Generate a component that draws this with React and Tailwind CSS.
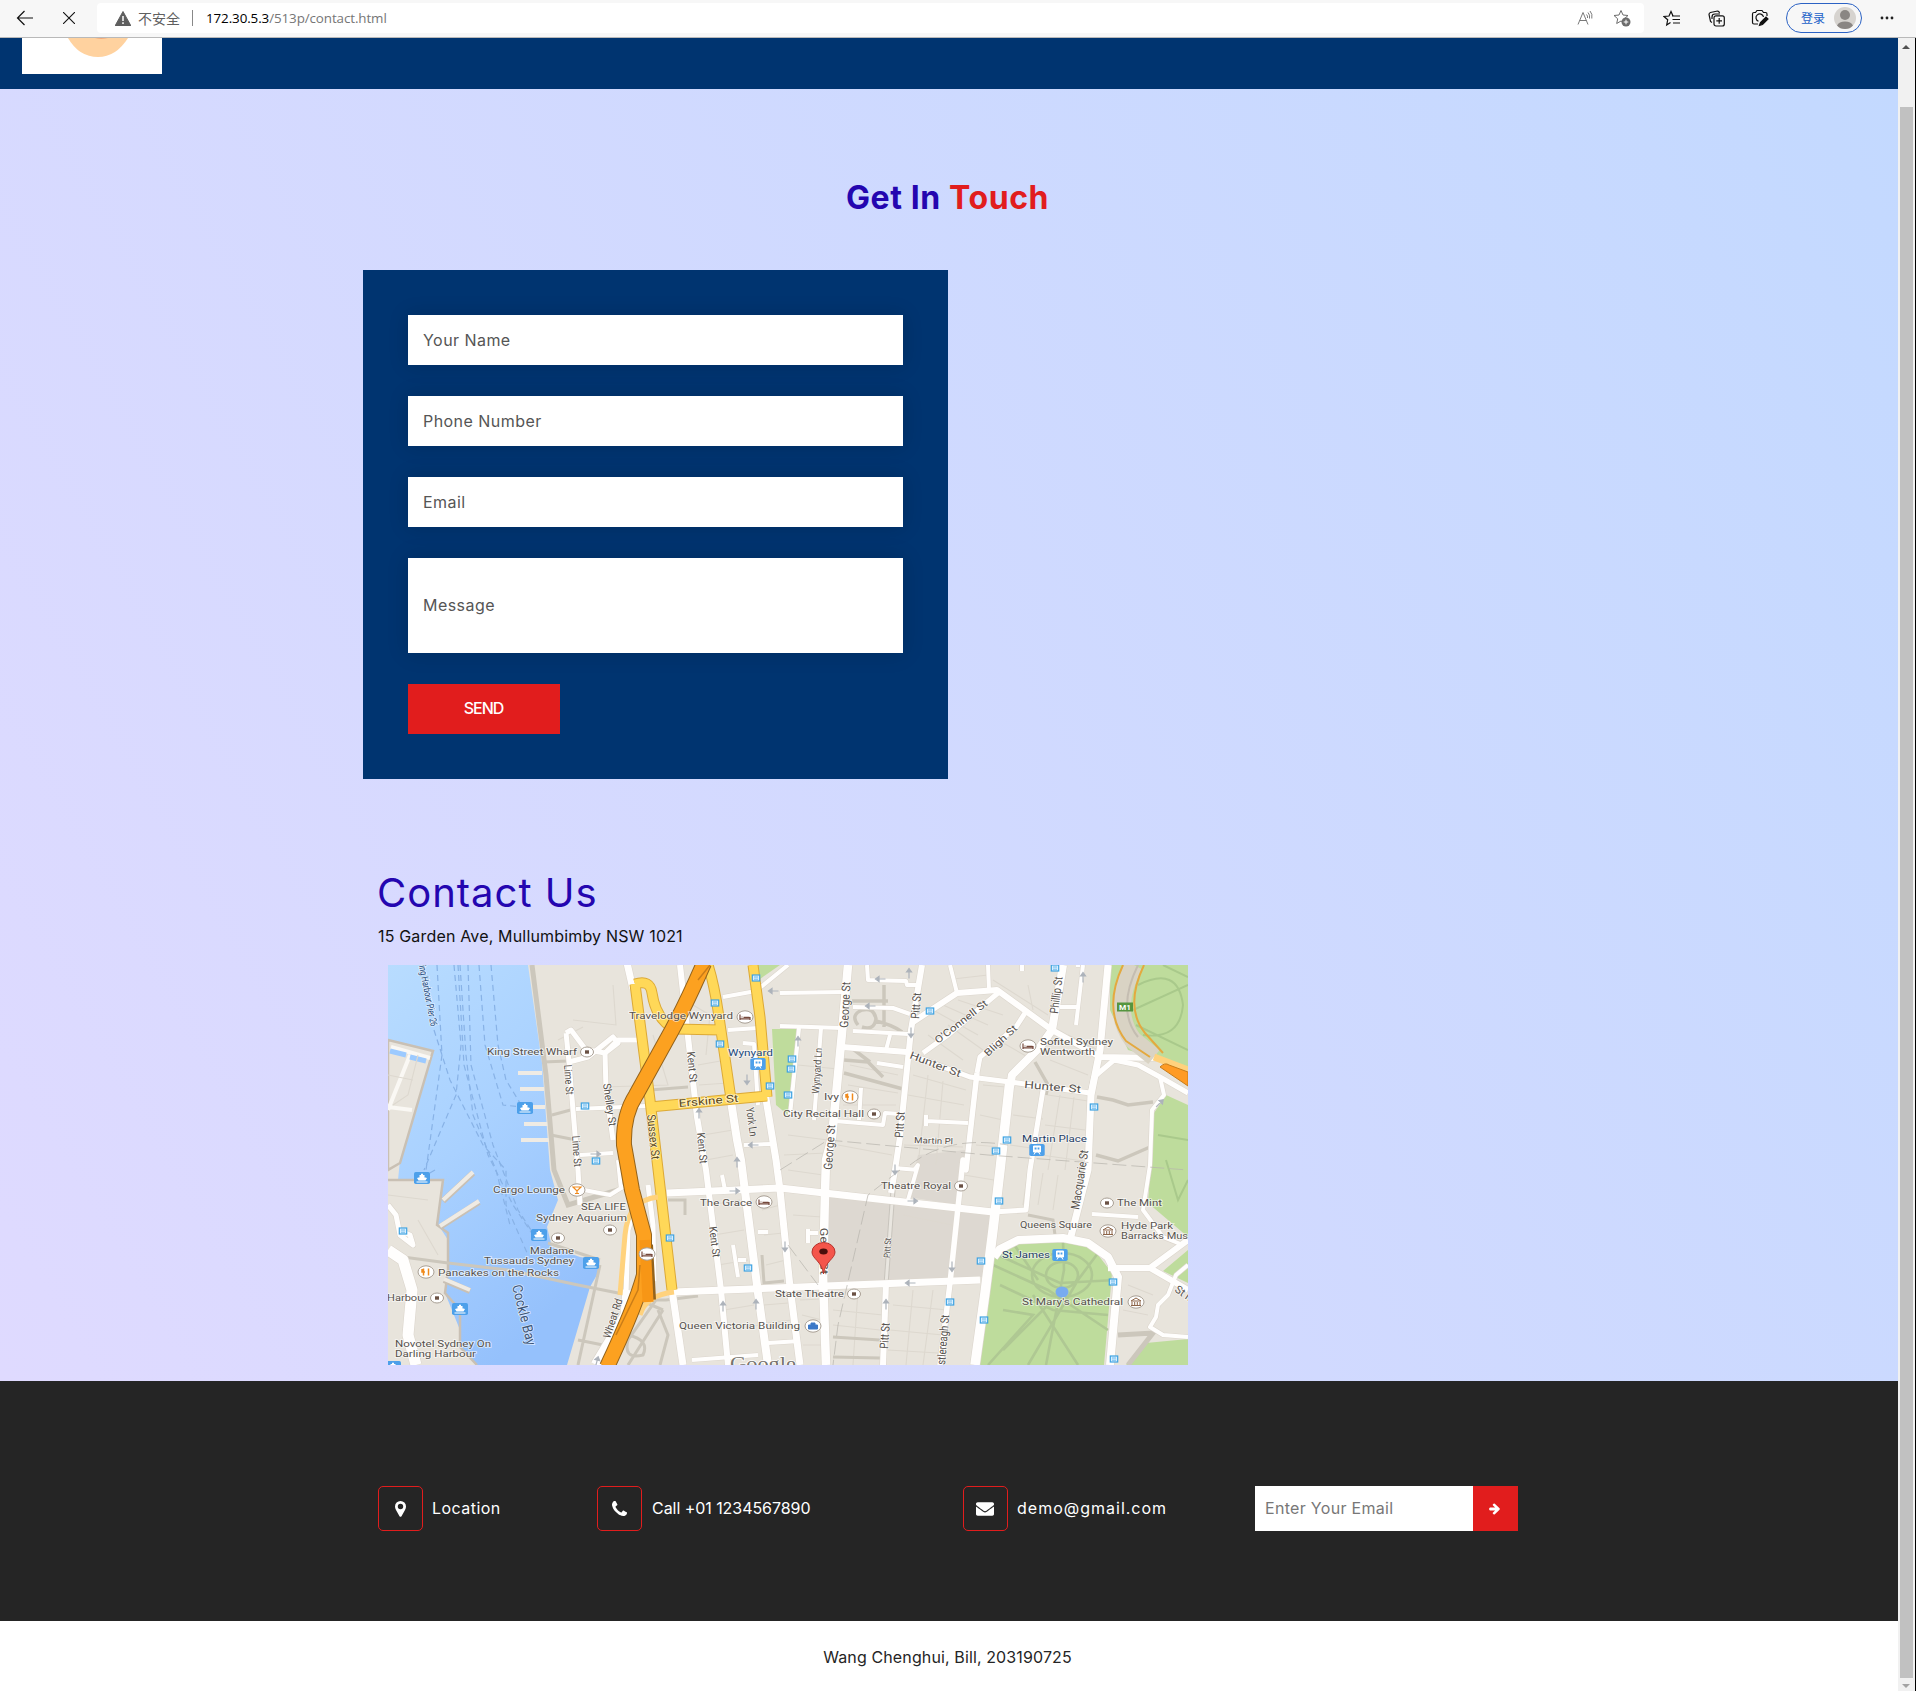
import React from "react";
import { FaEnvelope } from "react-icons/fa";

const WHITE_ROADS = [
  ["M292 0 L300 72 L309 152 L318 205 L333 325 L340 400", 6],
  ["M342 130 L349 175 L353 195 L370 328 L380 400", 8],
  ["M377 128 L388 195 L392 225 L402 322 L412 400", 7],
  ["M239 -2 L245 24", 7],
  ["M284 325 L295 400", 7],
  ["M460 0 L454 68 L444 172 L438 195 L437 228 L435 312 L438 400", 8.5],
  ["M534 0 L523 65 L512 172 L507 205 L503 228", 6],
  ["M498 318 L495 400", 6],
  ["M589 108 L578 205 L575 195 L562 318 L552 400", 5.5],
  ["M622 115 L612 205 L605 265 L597 328 L587 400", 9.5],
  ["M655 125 L642 205 L638 245 L605 247", 5],
  ["M523 90 L582 112 L622 117 L702 128", 5],
  ["M720 0 L712 85 L703 130 L700 205 L682 275", 7],
  ["M622 122 L624 110 L652 82 L664 65 L675 0", 8],
  ["M535 88 L560 70 L610 28", 5],
  ["M525 57 L569 28 L609 25 L664 65 L712 92 L769 93", 6],
  ["M589 108 L592 92 L628 62 L637 48", 5],
  ["M600 0 L601 25 M569 28 L562 0 M634 0 L634 6", 4],
  ["M279 228 L392 223 L605 247", 7],
  ["M285 327 L412 322 L592 315", 7],
  ["M606 292 L612 284 L630 275 L675 273 L700 278 L720 292 L730 312 L722 400", 8],
  ["M720 303 L762 303 L800 325 M762 303 L800 275", 6],
  ["M702 130 L706 112 L726 95 L750 100 L772 112 L800 128", 5],
  ["M772 112 L776 130 L764 145 L762 200 L755 245 L775 272 L795 280", 4],
  ["M454 82 L519 87", 6],
  ["M465 66 L520 69 M502 70 L498 85 M392 61 L454 63 M392 28 L456 27 M479 0 L480 15 L518 16 L519 20 L530 20", 4],
  ["M465 42 L505 43 L522 49", 4],
  ["M489 98 L515 102 M538 150 L538 161 M538 156 L580 158", 4],
  ["M447 156 L495 160 L497 148 L512 149 M473 123 L471 155", 4],
  ["M688 0 L692 0 M695 0 L688 60 M672 42 L690 42", 4],
  ["M433 63 L426 155 M411 63 L402 150", 4],
  ["M335 32 L368 26 L400 0 M340 65 L370 63", 4],
  ["M355 78 L366 79 L370 140 M356 180 L384 179", 4],
  ["M178 68 L181 97 L190 205 L192 240 M178 68 L183 65 L198 85 M181 97 L200 92 L225 72 L230 78 L217 88 M200 85 L217 88 L230 75 L250 75", 5],
  ["M217 88 L218 125 L225 175", 5],
  ["M188 144 L258 141 M192 190 L225 188 M196 225 L222 230 L238 220 M230 195 L233 225", 4],
  ["M0 240 L8 250 L12 270 L25 280 L22 270 L10 265", 5],
  ["M0 285 L15 295 L24 325 L20 370 L28 400", 11],
  ["M345 280 L350 312 M350 295 L358 295 M370 267 L380 267 M334 210 L337 225 M304 395 L370 390 M380 378 L412 376", 4],
  ["M260 220 L265 260 L266 316 M248 240 L240 265 L238 330", 5],
  ["M240 325 L238 350 L208 400", 11],
  ["M527 204 L530 200 L520 235 M507 203 L530 205", 4],
  ["M420 264 L420 278 M420 268 L430 268", 4],
  ["M800 300 L788 310 L780 330 L770 340 L768 352 L762 362 L775 370 L800 372", 4],
  ["M704 249 L750 252", 4],
];

const MINOR = [
  "M195 62 L170 75 M225 20 L228 60 L185 55 M265 70 L280 120 L215 122",
  "M305 40 L322 50 L318 90 M310 100 L338 95 M311 120 L340 118 M315 170 L345 165",
  "M318 195 L345 190 M322 240 L352 235 M326 270 L356 265 M330 300 L360 295",
  "M336 345 L366 340 M338 365 L372 360 M374 245 L392 240 M376 270 L395 268 M378 300 L398 295",
  "M376 340 L400 338 M378 358 L404 355 M410 100 L450 104 M400 170 L440 175 M396 190 L438 188",
  "M400 205 L435 210 M405 250 L434 252 M412 335 L434 334 M414 350 L434 355 M415 380 L436 380",
  "M462 100 L510 110 M460 120 L510 128 M455 140 L508 140 M450 180 L504 190",
  "M525 110 L578 125 M520 130 L576 140 M516 180 L575 182 M540 110 L530 200 M555 116 L548 200",
  "M595 120 L618 122 M592 150 L615 155 M588 180 L612 182 M625 150 L655 154 M622 180 L650 184",
  "M660 130 L700 136 M657 160 L697 165 M653 190 L695 196 M672 130 L660 205 M686 132 L677 205",
  "M545 45 L590 70 M555 40 L600 60 M570 35 L615 50 M540 70 L575 95 M560 60 L595 85 M610 75 L645 95",
  "M600 10 L565 14 M605 15 L660 50 M640 20 L645 45 M680 70 L710 85 M662 95 L700 110",
  "M576 210 L606 215 M572 240 L604 246 M515 250 L565 260 M505 340 L560 345 M502 365 L555 370 M500 385 L550 388",
  "M445 345 L495 350 M445 360 L492 365 M470 325 L465 400 M525 325 L518 400 M545 325 L535 400",
  "M740 320 L765 330 M735 345 L760 350 M640 205 L635 240 M655 208 L650 240 M670 210 L665 245",
  "M30 90 L20 130 L5 140 M0 110 L25 115 M0 230 L40 235 M30 255 L50 290",
];

const LANES = [
  ["M464 36 L500 36 M496 20 L496 62 M470 60 Q462 50 474 45 Q486 42 488 54 Q486 66 474 62 M488 56 Q505 60 514 67", 3.5],
  ["M456 95 L480 97 L495 112 M456 108 L515 124 M465 84 L482 97", 3.5],
  ["M647 97 L660 120 L658 130 M709 132 L725 135 L740 140 L765 137 M708 190 L730 196 L762 182", 3.5],
  ["M144 0 L158 110 L166 205 L180 240 L230 225", 5],
  ["M0 290 L60 298 L120 305 L190 320 L240 330 L275 345 M160 278 L212 295", 3],
  ["M155 97 L180 96 M262 125 L300 122 M164 150 L190 143 M163 170 L188 175", 3],
  ["M260 335 L278 335 L310 331 M275 345 L240 400 M268 335 L240 375 Q235 395 255 390 Q262 375 240 370 M270 345 L280 370 L272 400", 3],
  ["M212 300 L190 400 M190 375 L225 382", 3],
  ["M374 290 L376 318 L396 316 M280 235 L297 235 L297 250", 3],
  ["M445 372 L492 375 M445 392 L492 393 M640 250 L665 255 L667 270", 3],
  ["M730 370 L765 368 L740 400", 5],
];

const PARK_PATHS =
  "M674 310 m-16 0 a16 13 0 1 0 32 0 a16 13 0 1 0 -32 0 M674 310 m-30 0 a30 22 0 1 0 60 0 a30 22 0 1 0 -60 0 M605 300 L660 325 L720 365 M610 290 L672 318 L728 315 M675 276 L676 305 L658 400 M625 278 L650 315 M710 288 L690 315 L640 400 M612 320 L665 345 L720 350 M615 345 L645 350 L600 400 M645 330 L690 400 M615 385 L660 340";

const DASHES = [
  "M49 0 L54 90 L38 205",
  "M66 0 L73 80 L68 130 L36 205",
  "M72 0 L78 90 L85 150 L108 205 L122 260",
  "M80 0 L83 100 L105 180 L130 245 L145 268",
  "M91 0 L97 80 L115 140 L134 142",
  "M103 0 L110 80 L118 115 L132 138",
  "M46 65 L62 115 L95 180 L118 205 L118 240 L140 290",
  "M70 0 L76 100 L100 190 L125 240 L145 270",
  "M47 205 L35 212",
];

const LABELS = [
  ["Travelodge Wynyard", 241, 54, 104, 9],
  ["King Street Wharf", 99, 90, 90, 9],
  ["Erskine St", 291, 142, 60, 10.5, -5, "#5c4a1c"],
  ["Wynyard", 340, 91, 45, 9, 0, "#234a7d"],
  ["Ivy", 436, 135, 15, 9],
  ["City Recital Hall", 395, 152, 81, 9],
  ["Martin Pl", 526, 178, 39, 8.5, 2],
  ["Sofitel Sydney", 652, 80, 73, 9],
  ["Wentworth", 652, 90, 55, 9],
  ["Martin Place", 634, 177, 65, 9, 0, "#1f3e66"],
  ["Hunter St", 521, 93, 54, 10.5, 21],
  ["Hunter St", 636, 123, 57, 10.5, 5],
  ["O'Connell St", 550, 79, 64, 10, -38],
  ["Bligh St", 600, 92, 41, 10, -43],
  ["Theatre Royal", 493, 224, 70, 9],
  ["The Mint", 729, 241, 45, 9],
  ["Queens Square", 632, 263, 72, 8.5],
  ["Hyde Park", 733, 264, 52, 9],
  ["Barracks Mus", 733, 274, 67, 9],
  ["St James", 614, 293, 48, 9, 0, "#1f3e66"],
  ["St Mary's Cathedral", 634, 340, 101, 9],
  ["State Theatre", 387, 332, 69, 9],
  ["Cargo Lounge", 105, 228, 72, 9],
  ["SEA LIFE", 193, 245, 45, 9],
  ["Sydney Aquarium", 148, 256, 91, 9],
  ["Madame", 142, 289, 44, 9],
  ["Tussauds Sydney", 96, 299, 90, 9],
  ["Pancakes on the Rocks", 50, 311, 121, 9],
  ["Harbour", -1, 336, 40, 9],
  ["Novotel Sydney On", 7, 382, 96, 9],
  ["Darling Harbour", 7, 392, 81, 9],
  ["The Grace", 312, 241, 52, 9],
  ["Queen Victoria Building", 291, 364, 121, 9],
  ["ing Harbour Pier 26", 31, 1, 62, 10, 79, "#234a7d"],
  ["Cockle Bay", 124, 321, 62, 14, 76, "#3c5578"],
  ["Lime St", 176, 100, 30, 11, 86],
  ["Lime St", 184, 171, 31, 11, 86],
  ["Shelley St", 215, 119, 43, 11, 82],
  ["Sussex St", 259, 150, 45, 12, 84, "#5c4a1c"],
  ["Kent St", 299, 87, 31, 11, 85],
  ["Kent St", 309, 168, 31, 11, 85],
  ["Kent St", 321, 262, 31, 11, 83],
  ["York Ln", 358, 143, 29, 11, 82],
  ["Wheat Rd", 222, 374, 41, 11, -72],
  ["George St", 460, 63, 46, 12, -87],
  ["George St", 444, 205, 45, 12, -86],
  ["Ge", 432, 263, 15, 11, 88],
  ["St", 432, 296, 14, 11, 88],
  ["Pitt St", 531, 54, 26, 12, -85],
  ["Pitt St", 515, 173, 26, 12, -86],
  ["Pitt St", 502, 293, 20, 9, -87],
  ["Pitt St", 500, 384, 26, 12, -86],
  ["Wynyard Ln", 431, 129, 46, 10.5, -86],
  ["Phillip St", 670, 49, 37, 12, -83],
  ["Macquarie St", 691, 245, 60, 12, -81],
  ["stlereagh St", 557, 400, 50, 12, -85],
  ["St M", 786, 326, 22, 11, 35],
];

const POIS = [
  [357, 52, "bed"], [199, 87, "dot"], [462, 132, "food"], [486, 149, "dot"], [640, 81, "bed"],
  [573, 221, "dot"], [719, 238, "dot"], [720, 266, "museum"], [466, 329, "dot"], [748, 337, "museum"],
  [189, 225, "drink"], [222, 265, "dot"], [170, 273, "dot"], [38, 307, "food"], [49, 333, "dot"],
  [376, 237, "bed"], [259, 289, "bed"], [425, 361, "bag"],
];

const FERRIES = [[137, 143], [34, 213], [151, 270], [203, 298], [72, 344], [5, 402]];
const TRAINS = [[370, 99], [649, 185], [672, 290]];
const BUSES = [
  [368, 13], [327, 38], [332, 79], [382, 121], [197, 141], [208, 196], [542, 46], [404, 94], [403, 104],
  [400, 130], [667, 3], [619, 175], [608, 186], [706, 142], [611, 236], [593, 296], [562, 337], [596, 355],
  [725, 317], [726, 394], [282, 273], [360, 303], [15, 266],
];
const ARROWS = [
  [385, 26, 180], [359, 115, 90], [311, 148, -90], [349, 197, -90], [365, 180, 180], [208, 189, 0],
  [521, 8, -90], [523, 68, 90], [492, 14, 180], [482, 41, 180], [410, 76, -90], [695, 12, -90],
  [347, 226, 0], [397, 282, 90], [335, 341, -90], [368, 339, -90], [525, 236, 0],
  [564, 302, 90], [522, 318, 180], [498, 339, -90], [507, 205, 90], [772, 138, -45], [209, 396, -75],
];

function Poi({ x, y, kind }) {
  return (
    <g transform={`translate(${x} ${y})`}>
      <ellipse rx={kind === "dot" ? 6.5 : 8} ry={kind === "dot" ? 5 : 6.2} fill="#fff" stroke="#a89f94" strokeWidth="1" />
      {kind === "dot" && <rect x="-2" y="-1.7" width="4" height="3.4" fill="#6a5144" />}
      {kind === "bed" && <path d="M-5 -2.5 V3 M-5 1.8 H5 M5 3 V0 M-1.5 .3 H4.5 M-3.5 0 h1" stroke="#75483b" strokeWidth="1.2" fill="none" />}
      {kind === "food" && <path d="M-2.5 -3.5 V3.5 M2.5 -3.5 V3.5 M-4 -3 V0 H-1" stroke="#f08a1c" strokeWidth="1.5" fill="none" />}
      {kind === "drink" && <path d="M-4 -3 H4 L0 1 Z M0 1 V3.5 M-2 3.5 H2" stroke="#f08a1c" strokeWidth="1.2" fill="none" />}
      {kind === "museum" && <path d="M-5 -1 L0 -4 L5 -1 Z M-4 0 V3 M-1.3 0 V3 M1.3 0 V3 M4 0 V3 M-5 3.5 H5" stroke="#8b6347" strokeWidth="1" fill="none" />}
      {kind === "bag" && <path d="M-4.5 -1 H4.5 V3 H-4.5 Z M-2 -1 V-3 H2 V-1" fill="#3b78c8" stroke="#3b78c8" strokeWidth="1" />}
    </g>
  );
}

function StreetMap() {
  return (
    <svg viewBox="0 0 800 400" className="block h-[400px] w-[800px] overflow-hidden" fontFamily="Roboto, sans-serif">
      <defs>
        <linearGradient id="water" x1="0" y1="0" x2="0.5" y2="1">
          <stop offset="0" stopColor="#b8dcff" />
          <stop offset="0.5" stopColor="#a9d1ff" />
          <stop offset="1" stopColor="#95c1fc" />
        </linearGradient>
      </defs>
      <rect width="800" height="400" fill="#e8e4dc" />
      <path d="M440 228 L605 248 L595 312 L440 320 Z M530 190 L578 185 L570 240 L520 232 Z" fill="#ddd8d1" />
      <path d="M0 0 H140 L154 98 L162 205 L170 235 L159 262 L164 282 L192 292 L212 295 L210 308 L202 322 L179 400 H89 L72 382 L72 365 L57 328 L60 305 V275 L49 258 L55 215 L10 215 L12 195 L45 85 L0 75 Z" fill="url(#water)" />
      <path d="M0 75 L45 86 L12 198 L0 205 Z" fill="#e8e4dc" stroke="#c9c0b4" strokeWidth="2.5" />
      <path d="M3 82 L42 93 M22 90 L0 145 M0 142 L24 145" fill="none" stroke="#faf8f4" strokeWidth="4" />
      <path d="M2 86 L18 90 M22 92 L38 96" stroke="#9ccaff" strokeWidth="5" />
      <path d="M0 215 H55 L49 260 L60 268 V305 L57 328 L72 345 V382 L89 400" fill="none" stroke="#c9c0b4" strokeWidth="2.5" />
      <path d="M55 236 L85 208 M52 262 L91 237 M56 315 L82 326" stroke="#c9c0b4" strokeWidth="6" />
      <path d="M55 235 L85 207 M52 261 L91 236 M56 314 L82 325 M130 108 H154 M132 124 H156 M136 159 H160 M133 175 H162 M135 142 H157" stroke="#efebe4" strokeWidth="4" />
      <path d="M384 64 H409 L400 150 L388 140 Z M368 0 H392 L372 14 Z" fill="#bfdc9c" />
      <path d="M722 0 L722 45 L740 85 L775 95 L800 105 V0 Z M778 130 L800 140 V272 L760 238 L766 148 Z M606 292 L630 277 L675 275 L704 282 L724 308 L716 400 H590 Z M800 285 L775 306 L800 318 Z M800 374 L758 378 L738 400 H800 Z" fill="#bedc9c" />
      <path d={PARK_PATHS} fill="none" stroke="#afc893" strokeWidth="2.6" />
      <path d="M750 20 Q790 0 795 40 Q792 75 755 70 M745 45 L800 20 M748 60 L800 85 M775 0 L800 12 M778 195 L790 235 L800 215 M770 170 L800 175" fill="none" stroke="#a9c98b" strokeWidth="2" />
      {MINOR.map((d) => <path key={d} d={d} fill="none" stroke="#ddd8cf" strokeWidth="1.1" />)}
      {LANES.map(([d, w]) => <path key={d} d={d} fill="none" stroke="#ccc7bc" strokeWidth={w} />)}
      <path d="M505 225 L498 320" stroke="#c8c4bd" strokeWidth="5" />
      <path d="M505 225 L498 320" stroke="#e9e6e0" strokeWidth="3" />
      {DASHES.map((d) => <path key={d} d={d} fill="none" stroke="#88b2e6" strokeWidth="1.2" strokeDasharray="6 4" />)}
      <g fill="none" strokeLinejoin="round">
        {WHITE_ROADS.map(([d, w]) => <path key={d} d={d} stroke="#dcd6cd" strokeWidth={w + 1.2} />)}
        {WHITE_ROADS.map(([d, w]) => <path key={d} d={d} stroke="#fffefd" strokeWidth={w} />)}
      </g>
      <g fill="none" strokeLinejoin="round">
        <path d="M746 0 Q722 45 745 75 L766 92" stroke="#d9d3c4" strokeWidth="18" />
        <path d="M735 0 Q714 45 738 76 L762 92 M756 0 Q736 42 757 68 L775 88" stroke="#e4a93f" strokeWidth="2" />
        <path d="M750 0 Q728 45 750 72" stroke="#c4bdb1" strokeWidth="2" />
        <path d="M766 92 L800 105" stroke="#ffd27d" strokeWidth="7" />
        <path d="M772 102 Q777 97 781 100 L800 107 V121 Z" fill="#ff9b24" stroke="#c67c1b" strokeWidth="1" />
      </g>
      <g fill="none" strokeLinejoin="round">
        {[["#dca936", 11], ["#ffd858", 9]].map(([c, w]) => (
          <path key={c} d="M247 19 L262 135 L284 325 M247 19 Q262 14 264 28 Q268 55 287 64 L333 65 M320 0 Q326 18 331 52 L343 134 M365 0 L372 52 L379 132 M262 142 L379 131" stroke={c} strokeWidth={w} />
        ))}
        <path d="M270 232 Q240 235 237 270 L232 330 M286 327 Q258 330 252 350" stroke="#ffd27d" strokeWidth="5" />
        <path d="M316 -2 Q300 35 284 65 L248 130 Q235 150 236 180 L244 225 L256 270 L256 310 Q248 340 219 402 M257 280 L260 335" stroke="#93631c" strokeWidth="16" />
        <path d="M316 -2 Q300 35 284 65 L248 130 Q235 150 236 180 L244 225 L256 270 L256 310 Q248 340 219 402" stroke="#fca120" strokeWidth="14" />
        <path d="M257 275 L260 337" stroke="#f79616" strokeWidth="11" />
        <path d="M322 0 L310 15 M252 300 L250 325 L228 370" stroke="#ca7d18" strokeWidth="1.5" />
      </g>
      <path d="M392 205 L440 175 L600 190 L800 205 M512 205 L480 230 L450 360 L445 400 M400 280 L430 320 M522 200 Q560 170 620 180" fill="none" stroke="#b7b3ad" strokeWidth="1" strokeDasharray="14 5" opacity=".7" />
      <ellipse cx="674" cy="327" rx="6.5" ry="5.5" fill="#78abf0" />
      {ARROWS.map(([x, y, r], i) => (
        <path key={i} d="M-5.5 0 H3 M1 -2.5 L4.5 0 L1 2.5 Z" transform={`translate(${x} ${y}) rotate(${r})`} fill="#adb3bb" stroke="#adb3bb" strokeWidth="1.2" />
      ))}
      {BUSES.map(([x, y], i) => (
        <g key={i} transform={`translate(${x} ${y})`}>
          <rect x="-3.7" y="-3" width="7.4" height="6" fill="#d9efff" stroke="#3ea2e2" strokeWidth="1.2" />
          <path d="M-2 -1 H2 M-2 1.2 H2" stroke="#5fb2e8" strokeWidth=".9" />
        </g>
      ))}
      {FERRIES.map(([x, y], i) => (
        <g key={i} transform={`translate(${x} ${y})`}>
          <rect x="-8" y="-6" width="16" height="12" rx="1.8" fill="#4da0ea" />
          <path d="M-5 0 L0 -1.5 L5 0 L3.5 2.5 H-3.5 Z M-2.5 -1 V-3 H-1 V-4.3 H1 V-3 H2.5 V-1 Z" fill="#fff" />
          <path d="M-5.5 4 H5.5" stroke="#fff" strokeWidth="1" />
        </g>
      ))}
      {TRAINS.map(([x, y], i) => (
        <g key={i} transform={`translate(${x} ${y})`}>
          <rect x="-7.7" y="-6" width="15.4" height="12" rx="1.8" fill="#4da0ea" />
          <path d="M-3.5 -4 H3.5 V2 H-3.5 Z M-3 4.5 L-1.5 2 M3 4.5 L1.5 2" fill="#fff" stroke="#fff" strokeWidth="1" />
          <path d="M-2.4 -2.5 H-.5 V-.5 H-2.4 Z M.6 -2.5 H2.4 V-.5 H.6 Z" fill="#4da0ea" />
        </g>
      ))}
      <rect x="729" y="37.5" width="16" height="9" fill="#55953f" />
      <text x="731" y="45.2" fontSize="8" fontWeight="700" fill="#fff" textLength="12" lengthAdjust="spacingAndGlyphs">M1</text>
      {LABELS.map(([t, x, y, w, s, r = 0, c = "#57524d"], i) => (
        <text key={i} transform={`translate(${x} ${y}) rotate(${r})`} fontSize={s} fill={c} stroke="#ffffff" strokeOpacity=".65" strokeWidth="1.6" paintOrder="stroke" textLength={w} lengthAdjust="spacingAndGlyphs">{t}</text>
      ))}
      {POIS.map(([x, y, k], i) => <Poi key={i} x={x} y={y} kind={k} />)}
      <text x="342" y="405" fontSize="19" fontFamily="Liberation Serif, serif" fill="#77736e" stroke="#fff" strokeWidth="1.5" paintOrder="stroke" textLength="66" lengthAdjust="spacingAndGlyphs">Google</text>
      <path d="M435.5 309 C434 296 424 294 424 287 A11.5 9.5 0 0 1 447 287 C447 294 437 296 435.5 309 Z" fill="#f4554b" stroke="#b5322b" strokeWidth="1" />
      <ellipse cx="435.5" cy="286.5" rx="4.2" ry="3" fill="#4a0e0b" />
    </svg>
  );
}

const STAR = "M8 1.5 L10 6 L15 6.5 L11.3 9.8 L12.3 14.5 L8 12 L3.7 14.5 L4.7 9.8 L1 6.5 L6 6 Z";

function BrowserBar() {
  return (
    <div className="flex h-[38px] w-full items-start border-b border-[#b9b9b9] bg-[#f7f7f7]">
      <div className="flex h-9 w-[97px] items-center">
        <svg className="ml-4 h-[18px] w-[18px]" viewBox="0 0 18 18" fill="none" stroke="#111" strokeWidth="1.2"><path d="M17 9 H1.5 M8.5 2 L1.5 9 L8.5 16" /></svg>
        <svg className="ml-[29px] h-3 w-3" viewBox="0 0 12 12" fill="none" stroke="#111" strokeWidth="1.1"><path d="M0 0 L12 12 M12 0 L0 12" /></svg>
      </div>
      <div className="mt-[3px] flex h-[30px] w-[1547px] items-center rounded-[4px] bg-white pl-[18px]">
        <svg className="h-[15px] w-4" viewBox="0 0 16 15"><path d="M8 .5 L16 15 H0 Z" fill="#5f5f5f" stroke="#5f5f5f" strokeLinejoin="round" /><path d="M8 5 V10 M8 11.3 V13" stroke="#fff" strokeWidth="1.5" /></svg>
        <span className="ml-[7px] w-[43px] whitespace-nowrap font-['Noto_Sans_CJK_SC',sans-serif] text-[14px] leading-5 text-[#5f5f5f]">不安全</span>
        <span className="ml-[11px] h-4 w-px bg-[#888]" />
        <span className="ml-[13px] whitespace-nowrap font-['Open_Sans',sans-serif] text-[13.4px] tracking-[-0.1px] text-[#767676]"><span className="text-black">172.30.5.3</span>/513p/contact.html</span>
        <div className="ml-auto flex items-center pr-[13px]">
          <svg className="h-4 w-4" viewBox="0 0 16 16" fill="none" stroke="#6b6b6b"><path d="M1 14.5 L6 2.5 L11 14.5 M2.7 10.5 H9.3 M9.5 4.5 Q11 6 10.5 8 M11 2.5 Q13.3 5 12.5 8.5 M13 1 Q15.8 4 14.8 8.5" strokeWidth=".9" /></svg>
          <svg className="ml-[20px] h-[18px] w-[18px]" viewBox="0 0 18 18" fill="none"><path d={STAR} stroke="#6b6b6b" /><circle cx="13" cy="13" r="4.5" fill="#6b6b6b" /><path d="M13 10.7 V15.3 M10.7 13 H15.3" stroke="#fff" /></svg>
        </div>
      </div>
      <div className="flex h-9 items-center">
        <svg className="ml-[19px] h-[17px] w-[17px]" viewBox="0 0 17 17" fill="none" stroke="#111" strokeWidth="1.2"><path d="M9 6 H10 L8 1.5 L6 6 L1 6.5 L4.7 9.8 L3.7 15 L7.5 12.5 M10.5 6 H17 M9.5 9.5 H17 M10 13 H17" /></svg>
        <svg className="ml-[28px] h-[17px] w-[17px]" viewBox="0 0 17 17" fill="none" stroke="#111" strokeWidth="1.2"><path d="M4 12.5 L2.5 11.5 L1 4.5 Q1 3 2.5 2.5 L9.5 1 Q11 1 11.5 3 M4 9 V7 Q4 4 7 4 H12" /><rect x="6" y="5.8" width="10.3" height="10.2" rx="2" /><path d="M11.2 8 V13.7 M8.3 10.9 H14" /></svg>
        <svg className="ml-[26px] h-[18px] w-[18px]" viewBox="0 0 18 18" fill="none" stroke="#111" strokeWidth="1.2"><path d="M7 15 H3 Q1.5 15 1.5 13.5 V5 Q1.5 3.5 3 3.5 H4.5 L6 1.5 H11 L12.5 3.5 H14.5 Q16 3.5 16 5 V7 M7.5 12.3 A3.8 3.8 0 1 1 12.5 8" /><path d="M8.5 16.3 L9.5 13.5 L15 8 L17 10 L11.5 15.5 Z" fill="#111" /></svg>
        <div className="ml-[17px] flex h-[30px] w-[76px] items-center rounded-full border border-[#2b62c4] pl-[14px]">
          <span className="w-6 whitespace-nowrap font-['Noto_Sans_CJK_SC',sans-serif] text-[12px] leading-5 text-[#2060c8]">登录</span>
          <svg className="ml-[9px] h-[22px] w-[22px]" viewBox="0 0 22 22"><circle cx="11" cy="11" r="11" fill="#d6d3cf" /><circle cx="11" cy="8" r="5" fill="#8a8683" /><path d="M3 18.5 Q5 14.5 11 14.5 Q17 14.5 19 18.5 Q16 22 11 22 Q6 22 3 18.5 Z" fill="#8a8683" /></svg>
        </div>
        <svg className="ml-[18px] h-1 w-[14px]" viewBox="0 0 14 4" fill="#222"><circle cx="2" cy="2" r="1.4" /><circle cx="7" cy="2" r="1.4" /><circle cx="12" cy="2" r="1.4" /></svg>
      </div>
    </div>
  );
}

function Field({ label, tall }) {
  return (
    <div className={`mb-[31px] flex w-full items-center bg-white pb-px pl-[15px] text-[16px] tracking-[0.45px] text-[#555] shadow-[0_0_20px_rgba(0,0,0,0.15)] ${tall ? "h-[95px]" : "h-[50px]"}`}>
      {label}
    </div>
  );
}

function IconBox({ children }) {
  return <span className="flex h-[45px] w-[45px] items-center justify-center rounded-[5px] border border-[#e11d1d] text-white">{children}</span>;
}

function PinIcon() {
  return (
    <svg className="h-4 w-[11px]" viewBox="0 0 11 16">
      <path fillRule="evenodd" d="M5.5 0 A5.5 5.5 0 0 1 11 5.5 Q11 7 10 9 L6.5 15.2 Q5.5 16.5 4.5 15.2 L1 9 Q0 7 0 5.5 A5.5 5.5 0 0 1 5.5 0 Z M5.5 2.8 A2.7 2.7 0 1 0 5.5 8.2 A2.7 2.7 0 1 0 5.5 2.8 Z" fill="#fff" />
    </svg>
  );
}

function HandsetIcon() {
  return (
    <svg className="h-[15px] w-[15px]" viewBox="0 128 1408 1408" fill="currentColor">
      <path d="M1408 1240q0 27-10 70.500t-21 68.500q-21 50-122 106-94 51-186 51-27 0-52.500-3.500t-57.500-12.500-47.500-14.500-55.500-20.500-49-18q-98-35-175-83-128-79-264.500-215.500t-215.500-264.500q-48-77-83-175-3-9-18-49t-20.500-55.500-14.500-47.500-12.500-57.500-3.500-52.500q0-92 51-186 56-101 106-122 25-11 68.500-21t70.500-10q14 0 21 3 18 6 53 76 11 19 30 54t35 63.500 31 53.500q3 4 17.500 25t21.500 35.500 7 28.500q0 20-28.500 50t-62 55-62 53-28.500 46q0 9 5 22.500t8.500 20.500 14 24 11.500 19q76 137 174 235t235 174q2 1 19 11.500t24 14 20.500 8.500 22.500 5q18 0 46-28.500t53-62 55-62 50-28.500q14 0 28.500 7t35.500 21.500 25 17.500q25 15 53.500 31t63.500 35 54 30q70 35 76 53 3 7 3 21z" />
    </svg>
  );
}

function ArrowIcon() {
  return (
    <svg className="mr-[2px] h-[12px] w-[11px]" viewBox="0 128 1472 1664" fill="currentColor">
      <path d="M1472 960q0 54-37 91l-651 651q-39 37-91 37-51 0-90-37l-75-75q-38-38-38-91t38-91l293-293H117q-52 0-84.500-37.500T0 1024V896q0-53 32.500-90.500T117 768h704L528 474q-38-36-38-90t38-90l75-75q38-38 90-38 53 0 91 38l651 651q37 35 37 90z" />
    </svg>
  );
}

export default function App() {
  return (
    <div className="flex h-[1691px] w-[1916px] flex-col overflow-hidden bg-white font-['Inter',sans-serif]">
      <BrowserBar />
      <div className="flex h-[1653px]">
        <main className="flex w-[1898px] flex-col">
          <header className="h-[51px] bg-[#003470] pl-[22px]">
            <div className="h-9 w-[140px] bg-white">
              <svg className="block h-9 w-[140px]" viewBox="0 0 140 36"><path d="M46 0 Q57 19 76 19 Q94 19 106 0 Z" fill="#ffd29f" /><path d="M73 0 H86 Q79 1.5 73 0 Z" fill="#ee9e70" /></svg>
            </div>
          </header>
          <section className="flex h-[1292px] flex-col bg-[linear-gradient(60deg,#dfdaff,#c3d9ff)] pl-[363px]">
            <h1 className="mt-[85px] w-[1170px] pr-px text-center text-[32px] font-bold leading-[48px] tracking-[0.6px] text-[#2406b0]">Get In <span className="text-[#e11d1d]">Touch</span></h1>
            <div className="mt-[48px] h-[509px] w-[585px] bg-[#003470] px-[45px] pt-[45px]">
              <Field label="Your Name" />
              <Field label="Phone Number" />
              <Field label="Email" />
              <Field label="Message" tall />
              <button className="flex h-[50px] w-[152px] items-center justify-center bg-[#e11d1d] pb-0.5 pr-px text-[16px] font-medium tracking-[-1px] text-white">SEND</button>
            </div>
            <div className="ml-[15px] mt-[90px]">
              <h2 className="-ml-px text-[40px] font-normal leading-[48px] tracking-[1px] text-[#2406b0]">Contact Us</h2>
              <p className="mt-[7px] text-[16px] leading-6 tracking-[0.17px] text-[#111]">15 Garden Ave, Mullumbimby NSW 1021</p>
              <div className="ml-[10px] mt-[17px]"><StreetMap /></div>
            </div>
          </section>
          <footer className="flex h-[240px] items-start bg-[#252525] pl-[378px] pt-[105px] text-[16px] text-white">
            <div className="flex w-[219px] items-center gap-[9px]"><IconBox><PinIcon /></IconBox><span className="pb-0.5 tracking-[0.45px]">Location</span></div>
            <div className="flex w-[366px] items-center gap-[10px]"><IconBox><HandsetIcon /></IconBox><span className="pb-0.5 tracking-[-0.05px]">Call +01 1234567890</span></div>
            <div className="flex w-[292px] items-center gap-[9px]"><IconBox><FaEnvelope className="mr-px h-[18px] w-[18px]" /></IconBox><span className="pb-0.5 tracking-[1px]">demo@gmail.com</span></div>
            <div className="flex h-[45px] w-[263px] bg-white">
              <span className="flex w-[218px] items-center pb-0.5 pl-[10px] tracking-[0.3px] text-[#777]">Enter Your Email</span>
              <span className="flex w-[45px] items-center justify-center bg-[#e11d1d]"><ArrowIcon /></span>
            </div>
          </footer>
          <div className="flex h-[70px] items-center justify-center bg-white pr-[3px] pt-[2px] text-[16px] tracking-[0.12px] text-[#252525]">Wang Chenghui, Bill, 203190725</div>
        </main>
        <aside className="flex w-[18px] flex-col items-center border-r border-black bg-[#f1f1f1] pr-px">
          <svg className="mt-[7px] h-1 w-2" viewBox="0 0 8 4"><path d="M0 4 L4 0 L8 4 Z" fill="#505050" /></svg>
          <div className="mt-[58px] h-[1571px] w-[13px] bg-[#c1c1c1]" />
          <svg className="mt-[6px] h-1 w-2" viewBox="0 0 8 4"><path d="M0 0 L4 4 L8 0 Z" fill="#a3a3a3" /></svg>
        </aside>
      </div>
    </div>
  );
}
